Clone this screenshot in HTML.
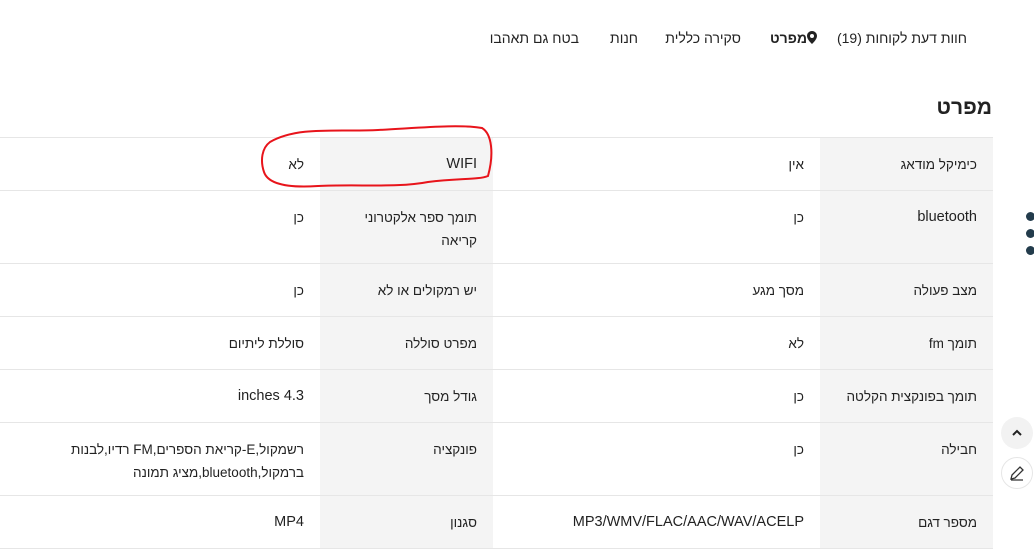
<!DOCTYPE html>
<html dir="rtl"><head><meta charset="utf-8"><style>
body{margin:0;width:1034px;height:546px;overflow:hidden;background:#fff;font-family:"Liberation Sans","Noto Sans CJK SC",sans-serif;color:#222;position:relative}
.nav{position:absolute;top:30px;font-size:14px;white-space:nowrap}
h1{position:absolute;right:42px;top:96px;margin:0;font-size:21px;font-weight:bold}
table{position:absolute;left:0;top:137px;width:993px;border-collapse:collapse;font-size:13.5px;direction:rtl}
td{border-top:1px solid #e6e6e6;border-bottom:1px solid #e6e6e6;padding:15px 16px 0;text-align:right;vertical-align:top;line-height:23px}
td.g{background:#f4f4f4}
.l{font-size:14.5px}
.dot{position:absolute;left:1026px;width:9px;height:9px;border-radius:50%;background:#233c4c}
.btn{position:absolute;left:1001px;width:32px;height:32px;border-radius:50%}
</style></head><body>
<div class="nav" style="right:67px">חוות דעת לקוחות (19)</div>
<div class="nav" style="right:217px;font-weight:bold">
<svg width="10" height="13" viewBox="0 0 10 13" style="vertical-align:-1px"><path d="M5 0C2.2 0 0 2.2 0 5c0 3.5 5 8 5 8s5-4.5 5-8C10 2.2 7.8 0 5 0zm0 7a2 2 0 110-4 2 2 0 010 4z" fill="#222"/></svg>מפרט</div>
<div class="nav" style="right:293px">סקירה כללית</div>
<div class="nav" style="right:396px">חנות</div>
<div class="nav" style="right:455px">בטח גם תאהבו</div>
<h1>מפרט</h1>
<table>
<colgroup><col style="width:173px"><col style="width:327px"><col style="width:173px"><col style="width:320px"></colgroup>
<tr style="height:53px"><td class="g">כימיקל מודאג</td><td>אין</td><td class="g l">WIFI</td><td>לא</td></tr>
<tr style="height:73px"><td class="g l">bluetooth</td><td>כן</td><td class="g">תומך ספר אלקטרוני<br>קריאה</td><td>כן</td></tr>
<tr style="height:53px"><td class="g">מצב פעולה</td><td>מסך מגע</td><td class="g">יש רמקולים או לא</td><td>כן</td></tr>
<tr style="height:53px"><td class="g">תומך fm</td><td>לא</td><td class="g">מפרט סוללה</td><td>סוללת ליתיום</td></tr>
<tr style="height:53px"><td class="g">תומך בפונקצית הקלטה</td><td>כן</td><td class="g">גודל מסך</td><td class="l">inches 4.3</td></tr>
<tr style="height:73px"><td class="g">חבילה</td><td>כן</td><td class="g">פונקציה</td><td>רשמקול,E-קריאת הספרים,FM רדיו,לבנות<br>ברמקול,bluetooth,מציג תמונה</td></tr>
<tr style="height:53px"><td class="g">מספר דגם</td><td class="l">MP3/WMV/FLAC/AAC/WAV/ACELP</td><td class="g">סגנון</td><td class="l">MP4</td></tr>
</table>
<svg style="position:absolute;left:258px;top:124px" width="238" height="65" viewBox="0 0 238 65"><path d="M12 18C40 2 80 8 120 6C160 4 200 0 224 4C234 10 236 30 230 52C220 56 200 54 170 58C140 64 100 60 60 62C30 64 10 60 6 48C2 36 4 24 12 18Z" fill="none" stroke="#e8141b" stroke-width="2"/></svg>
<div class="dot" style="top:212px"></div><div class="dot" style="top:229px"></div><div class="dot" style="top:246px"></div>
<div class="btn" style="top:417px;background:#f2f2f2"><svg width="32" height="32"><path d="M12 18l4-4 4 4" fill="none" stroke="#222" stroke-width="2"/></svg></div>
<div class="btn" style="top:457px;border:1px solid #e6e6e6;box-sizing:border-box"><svg width="30" height="30"><path d="M9 21l1-4 8-8 3 3-8 8z M9 22h12" fill="none" stroke="#333" stroke-width="1.3"/></svg></div>
</body></html>
